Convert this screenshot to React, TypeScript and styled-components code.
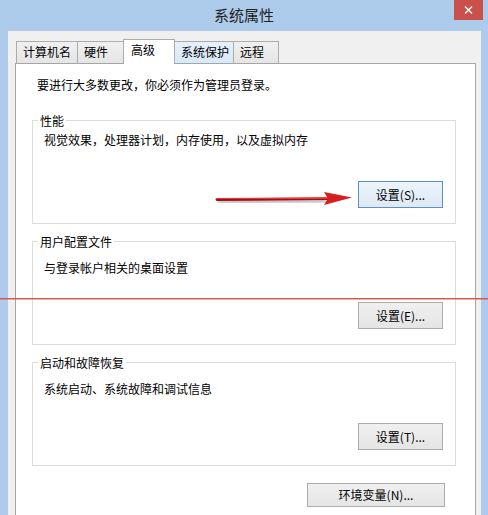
import React from "react";
import styled, { createGlobalStyle } from "styled-components";

const Global = createGlobalStyle`
  html, body { margin: 0; padding: 0; background: #ffffff; }
  body { font-family: "Noto Sans CJK SC", "Microsoft YaHei", sans-serif; }
`;

const Window = styled.div`
  position: relative;
  width: 488px;
  height: 515px;
  overflow: hidden;
  background: #adcbea;
  display: flex;
  flex-direction: column;
  font-family: "Noto Sans CJK SC", "Noto Sans", sans-serif;
  font-size: 12px;
  color: #000;
`;

const TitleBar = styled.div`
  flex: none;
  display: grid;
  grid-template-columns: 1fr auto 1fr;
  height: 31px;
`;

const Title = styled.div`
  grid-column: 2;
  font-size: 15px;
  line-height: 29px;
  color: #222;
`;

const CloseButton = styled.div`
  grid-column: 3;
  justify-self: end;
  align-self: start;
  width: 29px;
  height: 20px;
  margin-right: 5px;
  background: #c9504b;
  display: flex;
  align-items: center;
  justify-content: center;
`;

const Client = styled.div`
  flex: 1;
  margin: 0 7px 0 8px;
  background: #f0f0f0;
  padding: 8px 5px 0 7px;
  display: flex;
  flex-direction: column;
`;

const TabStrip = styled.div`
  display: flex;
  align-items: flex-end;
  height: 24px;
  padding-left: 1px;
  position: relative;
  z-index: 1;
`;

const Tab = styled.div<{ $w: number; $active?: boolean; $hover?: boolean }>`
  box-sizing: border-box;
  width: ${(p) => p.$w}px;
  height: ${(p) => (p.$active ? 25 : 22)}px;
  margin-bottom: ${(p) => (p.$active ? -1 : 0)}px;
  margin-left: -1px;
  &:first-child { margin-left: 0; }
  border: 1px solid #acacac;
  border-bottom: none;
  background: ${(p) =>
    p.$active
      ? "#ffffff"
      : p.$hover
      ? "linear-gradient(#e6f1fb, #d8e9f8)"
      : "linear-gradient(#f0f0f0, #e5e5e5)"};
  padding: 0 0 ${(p) => (p.$active ? 4 : 1)}px ${(p) => (p.$active ? 7 : 6)}px;
  display: flex;
  align-items: center;
  line-height: 16px;
  font-size: 12px;
  color: #000;
  white-space: nowrap;
  position: relative;
  z-index: ${(p) => (p.$active ? 2 : 1)};
`;

const Panel = styled.div`
  flex: 1;
  background: #ffffff;
  border: 1px solid #a5a5a5;
  border-bottom: none;
  padding: 13px 19px 0 16px;
  display: flex;
  flex-direction: column;
`;

const Intro = styled.div`
  margin-left: 5px;
  line-height: 16px;
`;

const Group = styled.div<{ $textTop: number; $first?: boolean }>`
  position: relative;
  box-sizing: border-box;
  height: 104px;
  margin-top: ${(p) => (p.$first ? 27 : 17)}px;
  border: 1px solid #dcdcdc;
  padding: ${(p) => p.$textTop}px 12px 15px 11px;
  display: flex;
  flex-direction: column;
`;

const Legend = styled.span`
  position: absolute;
  top: -8px;
  left: 5px;
  padding: 0 2px;
  background: #ffffff;
  line-height: 16px;
`;

const GroupText = styled.div`
  line-height: 16px;
`;

const ButtonRow = styled.div`
  margin-top: auto;
  display: flex;
  justify-content: flex-end;
`;

const Button = styled.button<{ $w: number; $h: number; $default?: boolean }>`
  box-sizing: border-box;
  width: ${(p) => p.$w}px;
  height: ${(p) => p.$h}px;
  padding: 0;
  border: 1px solid ${(p) => (p.$default ? "#5e8fbf" : "#acacac")};
  background: ${(p) =>
    p.$default
      ? "linear-gradient(#ecf4fb, #dde9f5)"
      : "linear-gradient(#f0f0f0, #e5e5e5)"};
  font-family: "Noto Sans CJK SC", "Noto Sans", sans-serif;
  font-size: 12px;
  line-height: 16px;
  color: #000;
`;

const EnvButton = styled(Button)`
  align-self: flex-end;
  margin-top: 17px;
  margin-right: 11px;
`;

const RedLine = styled.div`
  position: absolute;
  left: 0;
  right: 0;
  top: 298px;
  height: 1px;
  background: #d9534f;
  box-shadow: 0 1px 0 rgba(217, 83, 79, 0.45);
`;

const Arrow = styled.svg`
  position: absolute;
  left: 214px;
  top: 189px;
`;

const tabs = [
  { label: "计算机名", w: 62 },
  { label: "硬件", w: 47 },
  { label: "高级", w: 52, active: true },
  { label: "系统保护", w: 60, hover: true },
  { label: "远程", w: 46 },
];

const groups = [
  {
    legend: "性能",
    text: "视觉效果，处理器计划，内存使用，以及虚拟内存",
    button: "设置(S)...",
    top: 11,
    def: true,
  },
  {
    legend: "用户配置文件",
    text: "与登录帐户相关的桌面设置",
    button: "设置(E)...",
    top: 18,
  },
  {
    legend: "启动和故障恢复",
    text: "系统启动、系统故障和调试信息",
    button: "设置(T)...",
    top: 18,
  },
];

export default function App() {
  return (
    <>
      <Global />
      <Window>
        <TitleBar>
          <Title>系统属性</Title>
          <CloseButton>
            <svg width="9" height="8" viewBox="0 0 9 8">
              <path d="M1 0.5 L8 7.5 M8 0.5 L1 7.5" stroke="#fff" strokeWidth="1.4" />
            </svg>
          </CloseButton>
        </TitleBar>
        <Client>
          <TabStrip>
            {tabs.map((t) => (
              <Tab key={t.label} $w={t.w} $active={t.active} $hover={t.hover}>
                {t.label}
              </Tab>
            ))}
          </TabStrip>
          <Panel>
            <Intro>要进行大多数更改，你必须作为管理员登录。</Intro>
            {groups.map((g, i) => (
              <Group key={g.legend} $textTop={g.top} $first={i === 0}>
                <Legend>{g.legend}</Legend>
                <GroupText>{g.text}</GroupText>
                <ButtonRow>
                  <Button $w={85} $h={27} $default={g.def}>
                    {g.button}
                  </Button>
                </ButtonRow>
              </Group>
            ))}
            <EnvButton $w={138} $h={24}>
              环境变量(N)...
            </EnvButton>
          </Panel>
        </Client>
        <RedLine />
        <Arrow width="142" height="22" viewBox="0 0 142 22">
          <defs>
            <linearGradient id="shaft" x1="0" y1="0" x2="0" y2="1">
              <stop offset="0" stopColor="#e03a3a" />
              <stop offset="1" stopColor="#a50f14" />
            </linearGradient>
            <filter id="blur" x="-10%" y="-50%" width="120%" height="200%">
              <feGaussianBlur stdDeviation="1.2" />
            </filter>
          </defs>
          <path d="M4 13 L116 12" stroke="rgba(60,60,60,0.35)" strokeWidth="3" filter="url(#blur)" />
          <path d="M3 10.5 L114 9.5" stroke="url(#shaft)" strokeWidth="3" strokeLinecap="round" />
          <polygon points="110,3 138,8.5 110,16 114,9.5" fill="#d71d1d" />
        </Arrow>
      </Window>
    </>
  );
}
